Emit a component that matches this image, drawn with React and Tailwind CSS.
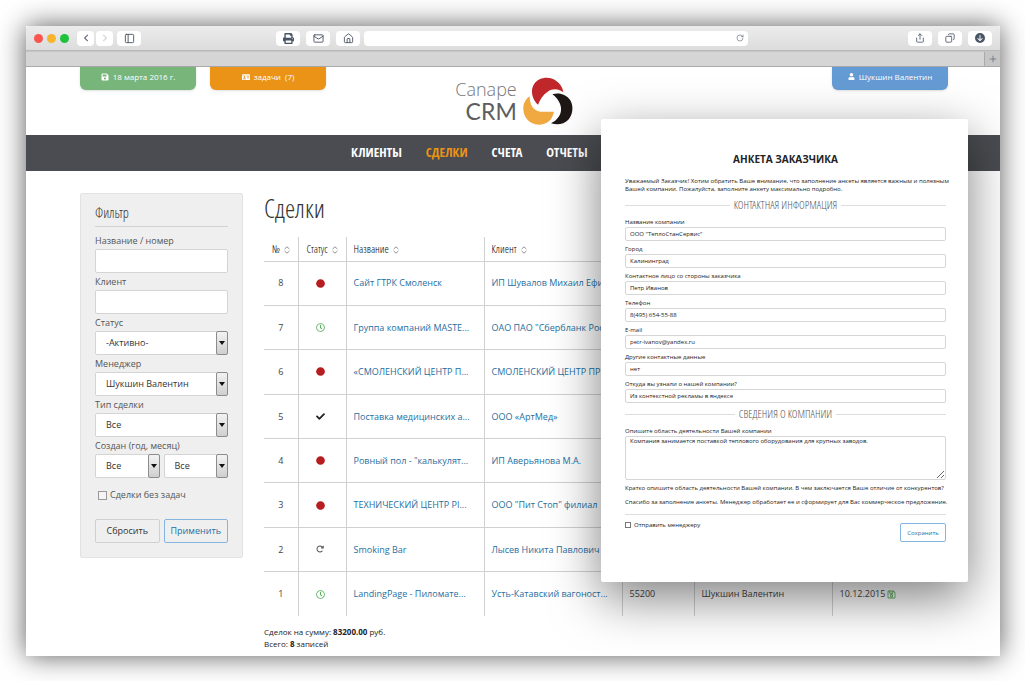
import React, { useState } from 'react';
import {
  FaCheck,
  FaChevronLeft,
  FaChevronRight,
  FaCircle,
  FaIdCard,
  FaPrint,
  FaRegClock,
  FaRegSave,
  FaSave,
  FaUser,
} from 'react-icons/fa';
import { FaCircleArrowDown, FaRotateRight } from 'react-icons/fa6';
import { Copy, House, Mail, PanelLeft, Plus, RotateCw, Share } from 'lucide-react';

const navItems = ['Клиенты', 'Сделки', 'Счета', 'Отчеты'];

const deals = [
  { id: 8, status: 'new', name: 'Сайт ГТРК Смоленск', client: 'ИП Шувалов Михаил Ефи' },
  { id: 7, status: 'wait', name: 'Группа компаний MASTE...', client: 'ОАО ПАО "Сбербланк Рос' },
  { id: 6, status: 'new', name: '«СМОЛЕНСКИЙ ЦЕНТР П...', client: 'СМОЛЕНСКИЙ ЦЕНТР ПР' },
  { id: 5, status: 'done', name: 'Поставка медицинских а...', client: 'ООО «АртМед»' },
  { id: 4, status: 'new', name: 'Ровный пол - "калькулят...', client: 'ИП Аверьянова М.А.' },
  { id: 3, status: 'new', name: 'ТЕХНИЧЕСКИЙ ЦЕНТР PI...', client: 'ООО "Пит Стоп" филиал' },
  { id: 2, status: 'repeat', name: 'Smoking Bar', client: 'Лысев Никита Павлович' },
  {
    id: 1,
    status: 'wait',
    name: 'LandingPage - Пиломате...',
    client: 'Усть-Катавский вагоност...',
    sum: '55200',
    manager: 'Шукшин Валентин',
    date: '10.12.2015',
  },
];

const contactFields = [
  ['company', 'Название компании', 'ООО "ТеплоСтанСервис"'],
  ['city', 'Город', 'Калининград'],
  ['person', 'Контактное лицо со стороны заказчика', 'Петр Иванов'],
  ['phone', 'Телефон', '8(495) 654-55-88'],
  ['email', 'E-mail', 'petr-ivanov@yandex.ru'],
  ['other', 'Другие контактные данные', 'нет'],
  ['source', 'Откуда вы узнали о нашей компании?', 'Из контекстной рекламы в яндексе'],
];

const chromeButton = 'flex h-[15px] w-6 items-center justify-center rounded bg-white text-gray-600';

const StatusIcon = ({ status }) => {
  if (status === 'new') return <FaCircle className="mx-auto size-[9px] text-[#b71c1f]" />;
  if (status === 'wait') return <FaRegClock className="mx-auto size-[9px] text-[#5cb060]" />;
  if (status === 'done') return <FaCheck className="mx-auto size-[9px] text-[#222]" />;
  return <FaRotateRight className="mx-auto size-2 text-[#555]" />;
};

const SortIcon = () => (
  <svg viewBox="0 0 6 8" className="ml-1 inline h-2 w-[6px] fill-none stroke-[#777]" strokeWidth="0.8">
    <path d="M0.6 3 L3 0.8 L5.4 3 M0.6 5 L3 7.2 L5.4 5" />
  </svg>
);

const Logo = () => (
  <a href="#" className="flex items-center gap-[6px]">
    <span className="flex flex-col items-end">
      <span className="text-[18px] leading-5 font-light text-[#777]">Canape</span>
      <span className="font-['Lato',sans-serif] text-[23px] leading-6 text-[#5d5d60]">CRM</span>
    </span>
    <svg viewBox="0 0 150 144" className="h-[48px] w-[50px]">
      <path
        fill="#bf272b"
        d="M45 83 C28 68 20 40 34 20 C48 0 80 -4 100 12 C113 22 119 32 121 46 C105 34 88 35 74 44 C60 53 52 66 45 83Z"
      />
      <path
        fill="#f0a840"
        d="M20 58 C20 82 30 102 52 104 C66 105 78 104 93 104 C88 128 72 143 47 143 C20 143 2 122 1 97 C0 80 8 66 20 58Z"
      />
      <path
        fill="#1d1715"
        d="M88 52 C108 46 130 52 142 70 C152 88 150 112 136 128 C122 143 102 144 84 139 C104 130 116 112 114 92 C112 76 102 62 88 52Z"
      />
    </svg>
  </a>
);

const BrowserBar = () => (
  <div>
    <div className="flex h-[25px] items-center border-b border-[#b9b9b9] bg-linear-to-b from-[#ececec] to-[#dcdcdc] px-2">
      <div className="flex gap-1">
        <span className="size-[9px] rounded-full bg-[#f9564f]" />
        <span className="size-[9px] rounded-full bg-[#f5b52c]" />
        <span className="size-[9px] rounded-full bg-[#1fc23b]" />
      </div>
      <div className="ml-2 flex gap-[2px]">
        <button type="button" aria-label="Назад" className="flex h-[15px] w-[17px] items-center justify-center rounded bg-white text-gray-500">
          <FaChevronLeft className="size-2" />
        </button>
        <button type="button" aria-label="Вперед" className="flex h-[15px] w-[17px] items-center justify-center rounded bg-white text-gray-300">
          <FaChevronRight className="size-2" />
        </button>
      </div>
      <button type="button" aria-label="Панель" className={`${chromeButton} ml-1`}>
        <PanelLeft className="size-[11px]" />
      </button>
      <div className="ml-[135px] flex gap-[6px]">
        <button type="button" aria-label="Печать" className={chromeButton}>
          <FaPrint className="size-[11px]" />
        </button>
        <button type="button" aria-label="Почта" className={chromeButton}>
          <Mail className="size-[11px]" />
        </button>
        <button type="button" aria-label="Домой" className={chromeButton}>
          <House className="size-[11px]" />
        </button>
      </div>
      <div className="ml-1 flex h-[15px] flex-1 items-center rounded bg-white pr-1">
        <input aria-label="Адрес" className="min-w-0 flex-1 outline-none" />
        <button type="button" aria-label="Обновить" className="text-gray-500">
          <RotateCw className="size-2" />
        </button>
      </div>
      <div className="ml-[160px] flex gap-[6px]">
        <button type="button" aria-label="Поделиться" className={chromeButton}>
          <Share className="size-[10px]" />
        </button>
        <button type="button" aria-label="Вкладки" className={chromeButton}>
          <Copy className="size-[10px] -scale-x-100" />
        </button>
        <button type="button" aria-label="Загрузки" className={chromeButton}>
          <FaCircleArrowDown className="size-[10px]" />
        </button>
      </div>
    </div>
    <div className="flex h-4 justify-end border-t border-b border-t-[#c6c6c6] border-b-[#a9a9a9] bg-[#d5d5d5]">
      <button type="button" aria-label="Новая вкладка" className="flex w-4 items-center justify-center border-l border-[#aaa] bg-[#c6c6c6] text-gray-500">
        <Plus className="size-[10px]" />
      </button>
    </div>
  </div>
);

const Select = ({ id, label, value, className = '' }) => (
  <div className={`relative ${className}`}>
    <select
      id={id}
      aria-label={label}
      className="block h-6 w-full appearance-none rounded-xs border border-[#d4d4d4] bg-white pl-[10px] text-[9px] text-[#333]"
    >
      <option>{value}</option>
    </select>
    <span className="pointer-events-none absolute inset-y-0 right-0 flex w-3 items-center justify-center rounded-xs border border-[#8c8c8c] bg-linear-to-b from-[#f3f3f3] to-[#cfcfcf]">
      <svg viewBox="0 0 6 4" className="h-1 w-[6px]">
        <path d="M0 0 H6 L3 4 Z" fill="#111" />
      </svg>
    </span>
  </div>
);

const filterLabel = 'block text-[9px] leading-[17px] text-[#555]';
const filterInput = 'block h-6 w-full rounded-xs border border-[#d4d4d4] bg-white px-2 text-[9px]';

const Filter = () => (
  <form className="w-[163px] shrink-0 rounded-xs border border-[#e2e2e2] bg-[#efefef] px-[14px] pt-[9px] pb-[14px]">
    <h2 className="mb-[5px] border-b border-[#d2d2d2] pb-[3px] font-['Open_Sans_Condensed_Light','Open_Sans',sans-serif] text-[14px] leading-5 text-[#333]">
      Фильтр
    </h2>
    <label htmlFor="filter-name" className={filterLabel}>Название / номер</label>
    <input id="filter-name" className={filterInput} />
    <label htmlFor="filter-client" className={filterLabel}>Клиент</label>
    <input id="filter-client" className={filterInput} />
    <label htmlFor="filter-status" className={filterLabel}>Статус</label>
    <Select id="filter-status" value="-Активно-" />
    <label htmlFor="filter-manager" className={filterLabel}>Менеджер</label>
    <Select id="filter-manager" value="Шукшин Валентин" />
    <label htmlFor="filter-type" className={filterLabel}>Тип сделки</label>
    <Select id="filter-type" value="Все" />
    <label htmlFor="filter-year" className={filterLabel}>Создан (год, месяц)</label>
    <div className="flex gap-1">
      <Select id="filter-year" value="Все" className="flex-1" />
      <Select id="filter-month" label="Месяц" value="Все" className="flex-1" />
    </div>
    <label className="mt-[9px] ml-[3px] flex items-center gap-[3px] text-[9px] leading-4 text-[#555]">
      <input type="checkbox" className="size-[9px] appearance-none border border-[#999] bg-[#f4f4f4]" />
      Сделки без задач
    </label>
    <div className="mt-4 flex gap-1">
      <button type="reset" className="h-6 flex-1 rounded-xs border border-[#d0d0d0] text-[9px] text-[#333]">
        Сбросить
      </button>
      <button type="submit" className="h-6 flex-1 rounded-xs border border-[#86b4e0] text-[9px] text-[#1f6f9f]">
        Применить
      </button>
    </div>
  </form>
);

const DealsTable = () => (
  <section className="min-w-0 flex-1">
    <h1 className="font-['Open_Sans_Condensed_Light','Open_Sans',sans-serif] text-[26px] leading-[30px] text-[#333]">Сделки</h1>
    <table className="mt-[14px] h-[379px] w-full table-fixed border-collapse text-[9px] text-[#444]">
      <colgroup>
        <col className="w-[34px]" />
        <col className="w-12" />
        <col className="w-[138px]" />
        <col className="w-[138px]" />
        <col className="w-[72px]" />
        <col className="w-[138px]" />
        <col />
      </colgroup>
      <thead>
        <tr className="h-6 divide-x divide-[#d0d0d0] border-b border-[#d0d0d0] text-left font-['Open_Sans_Condensed_Light','Open_Sans',sans-serif] text-[11px] whitespace-nowrap text-black">
          <th className="text-center font-normal">№<SortIcon /></th>
          <th className="text-center font-normal">Статус<SortIcon /></th>
          <th className="pl-[7px] font-normal">Название<SortIcon /></th>
          <th className="pl-[7px] font-normal">Клиент<SortIcon /></th>
          <th />
          <th />
          <th />
        </tr>
      </thead>
      <tbody>
        {deals.map((deal) => (
          <tr key={deal.id} className="h-11 divide-x divide-[#d0d0d0] border-b border-[#d0d0d0] whitespace-nowrap last:border-b-0">
            <td className="text-center">{deal.id}</td>
            <td className="pr-1"><StatusIcon status={deal.status} /></td>
            <td className="overflow-hidden pl-[7px]"><a href="#" className="text-[#1f6f9f]">{deal.name}</a></td>
            <td className="overflow-hidden pl-[7px]"><a href="#" className="text-[#1f6f9f]">{deal.client}</a></td>
            <td className="pl-[7px]">{deal.sum}</td>
            <td className="pl-[7px]">{deal.manager}</td>
            <td className="pl-[7px]">
              {deal.date}
              {deal.date && <FaRegSave className="ml-[2px] inline size-[9px] text-[#5cb060]" />}
            </td>
          </tr>
        ))}
      </tbody>
    </table>
    <p className="mt-[10px] text-[8px] leading-3 text-[#222]">
      Сделок на сумму: <b>83200.00</b> руб.
      <br />
      Всего: <b>8</b> записей
    </p>
  </section>
);

const SectionTitle = ({ children }) => (
  <h3 className="flex items-center gap-1 font-['Open_Sans_Condensed_Light','Open_Sans',sans-serif] text-[11px] leading-[14px] text-[#555] uppercase before:h-px before:flex-1 before:bg-[#ddd] after:h-px after:flex-1 after:bg-[#ddd]">
    {children}
  </h3>
);

const Questionnaire = () => {
  const [formData, setFormData] = useState(
    Object.fromEntries(contactFields.map(([key, , value]) => [key, value]))
  );

  const handleChange = (e) => {
    const { name, value } = e.target;
    setFormData((prev) => ({ ...prev, [name]: value }));
  };

  return (
    <form className="absolute top-[93px] right-8 w-[367px] rounded-xs bg-white pt-8 pr-[22px] pb-10 pl-6 text-[6px] leading-2 text-[#222] shadow-[0_16px_50px_rgba(0,0,0,0.5)]">
      <h2 className="text-center text-[10px] leading-4 font-bold uppercase">Анкета заказчика</h2>
      <p className="-mr-3 mt-[10px] mb-[5px]">
        Уважаемый Заказчик! Хотим обратить Ваше внимание, что заполнение анкеты является важным и полезным
        Вашей компании. Пожалуйста, заполните анкету максимально подробно.
      </p>
      <SectionTitle>Контактная информация</SectionTitle>
      <div className="mt-[6px] mb-1 flex flex-col gap-1">
        {contactFields.map(([key, label]) => (
          <div key={key}>
            <label htmlFor={key} className="block h-[9px]">{label}</label>
            <input
              id={key}
              name={key}
              value={formData[key]}
              onChange={handleChange}
              className="block h-[14px] w-full rounded-xs border border-[#d6d6d6] px-1 text-[6px]"
            />
          </div>
        ))}
      </div>
      <SectionTitle>Сведения о компании</SectionTitle>
      <label htmlFor="about" className="mt-[6px] block h-[9px]">Опишите область деятельности Вашей компании</label>
      <textarea
        id="about"
        defaultValue="Компания занимается поставкой теплового оборудования для крупных заводов."
        className="block h-11 w-full rounded-xs border border-[#d6d6d6] px-1"
      />
      <p className="mt-1">Кратко опишите область деятельности Вашей компании. В чем заключается Ваше отличие от конкурентов?</p>
      <p className="-mr-3 mt-[6px]">
        Спасибо за заполнение анкеты. Менеджер обработает ее и сформирует для Вас коммерческое предложение.
      </p>
      <div className="mt-2 flex items-start justify-between border-t border-[#ddd] pt-[6px]">
        <label className="flex items-center gap-[3px]">
          <input type="checkbox" className="size-[6px] appearance-none border border-[#777] bg-white" />
          Отправить менеджеру
        </label>
        <button type="submit" className="mt-[2px] h-[19px] w-[46px] rounded-xs border border-[#86b4e0] text-[#1f6f9f]">
          Сохранить
        </button>
      </div>
    </form>
  );
};

export default function App() {
  return (
    <div className="bg-white pt-[26px] pr-[25px] pb-[25px] pl-[26px] font-['Open_Sans',sans-serif]">
      <div className="shadow-[0_0_26px_rgba(0,0,0,0.65)]">
        <div className="relative overflow-hidden rounded-t-xs bg-white">
          <BrowserBar />
          <header className="flex h-[68px] items-start pr-[52px] pl-[54px] text-[8px] text-white">
            <div className="flex flex-1 gap-[14px]">
              <a href="#" className="flex h-[23px] w-[116px] items-center justify-center gap-1 rounded-b-md bg-[#77b57b] pb-1 shadow-sm">
                <FaSave className="size-2" />
                18 марта 2016 г.
              </a>
              <a href="#" className="flex h-[23px] w-[116px] items-center justify-center gap-1 rounded-b-md bg-[#eb9316] pb-1 shadow-sm">
                <FaIdCard className="size-2" />
                задачи&nbsp; (7)
              </a>
            </div>
            <div className="pt-[10px]">
              <Logo />
            </div>
            <div className="flex flex-1 justify-end">
              <a href="#" className="flex h-[23px] w-[116px] items-center justify-center gap-1 rounded-b-md bg-[#659bd4] pb-1 shadow-sm">
                <FaUser className="size-[7px]" />
                Шукшин Валентин
              </a>
            </div>
          </header>
          <nav className="flex h-9 items-center gap-6 bg-[#4a4c51] pl-[325px] font-['Open_Sans_Condensed','Open_Sans',sans-serif] text-[13px] font-bold text-white uppercase">
            {navItems.map((item) => (
              <a key={item} href="#" className={item === 'Сделки' ? 'text-[#eb9316]' : ''}>
                {item}
              </a>
            ))}
          </nav>
          <main className="flex items-start gap-[21px] pt-[22px] pr-[52px] pb-[6px] pl-[54px]">
            <Filter />
            <DealsTable />
          </main>
          <Questionnaire />
        </div>
      </div>
    </div>
  );
}
